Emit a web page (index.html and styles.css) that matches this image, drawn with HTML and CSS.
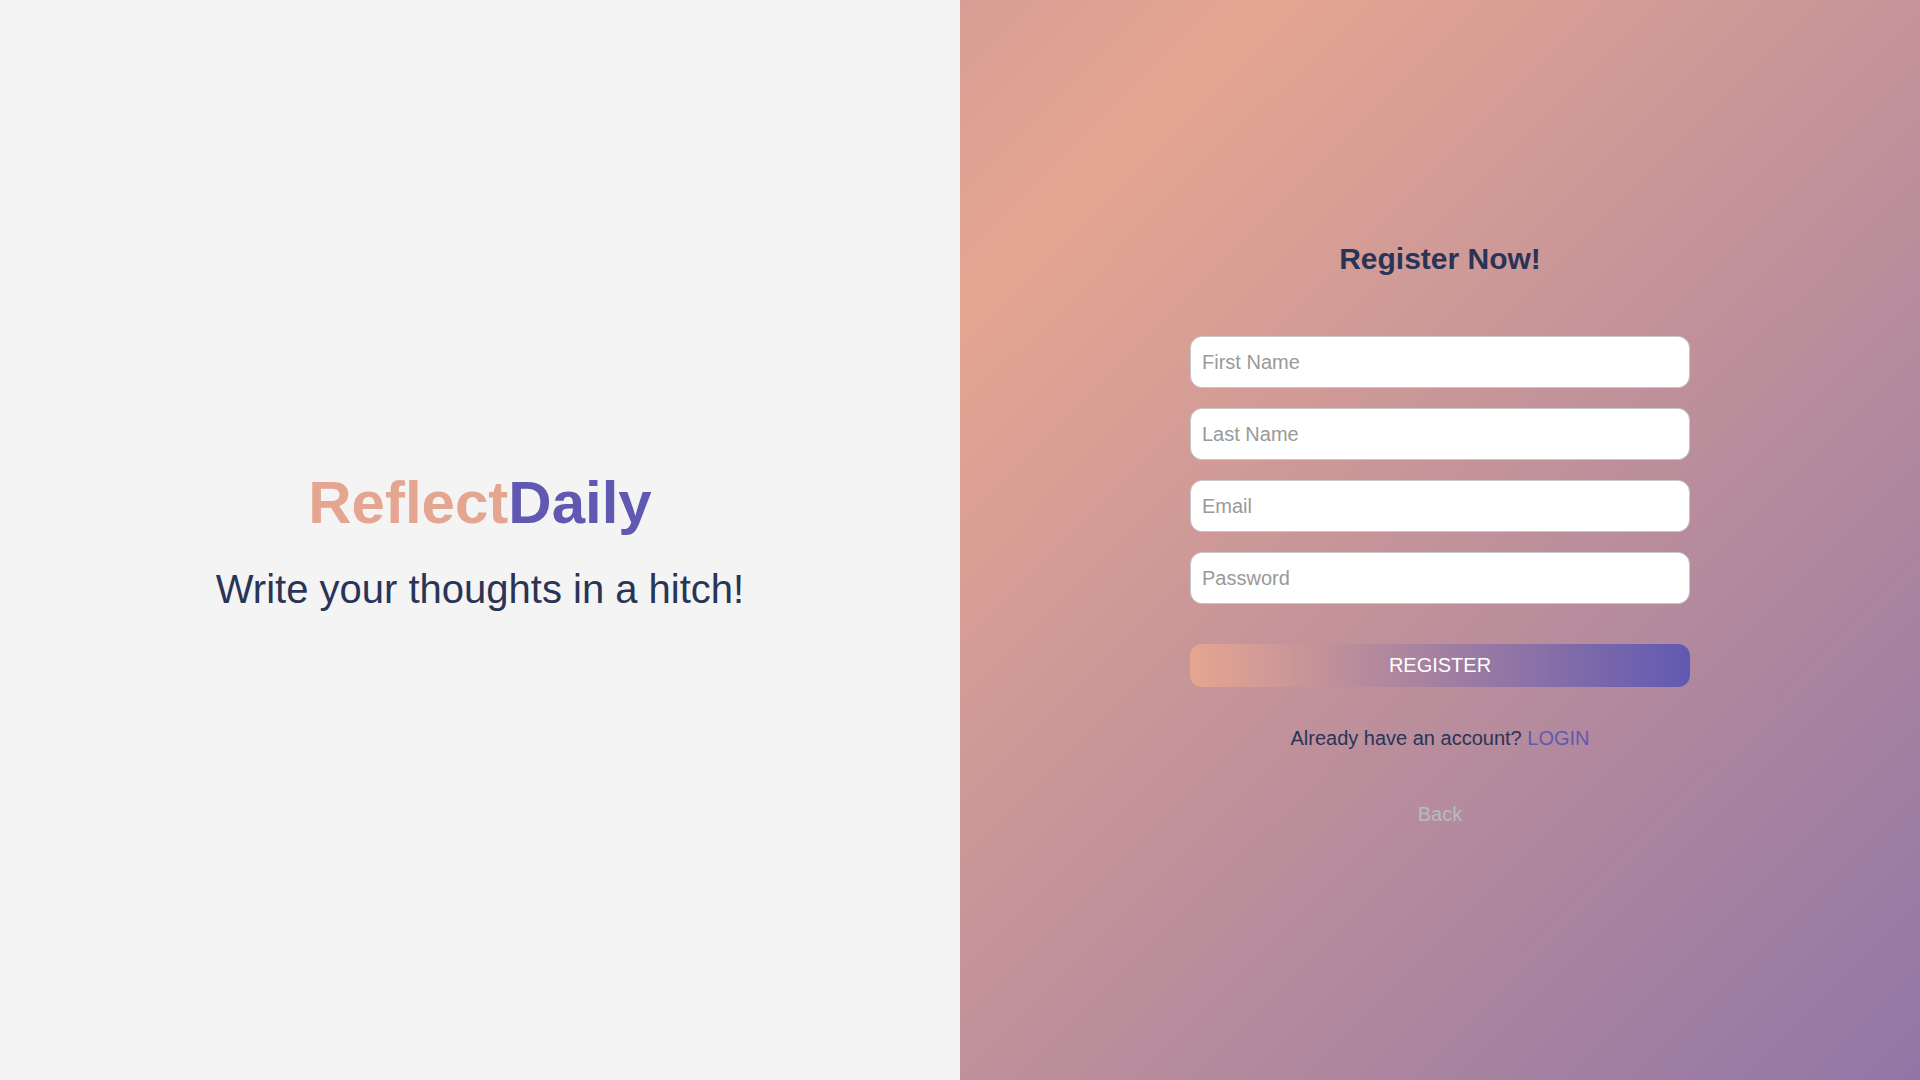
FILE: index.html
```html
<!DOCTYPE html>
<html lang="en">
<head>
  <meta charset="utf-8">
  <meta name="viewport" content="width=device-width, initial-scale=1">
  <title>ReflectDaily - Register</title>
  <link rel="stylesheet" href="styles.css">
</head>
<body>
  <main class="page">
    <section class="intro">
      <h1 class="brand"><span class="brand-first">Reflect</span><span class="brand-second">Daily</span></h1>
      <p class="tagline">Write your thoughts in a hitch!</p>
    </section>
    <section class="panel">
      <h2 class="panel-title">Register Now!</h2>
      <form class="form">
        <input class="field" type="text" name="firstName" placeholder="First Name" aria-label="First Name">
        <input class="field" type="text" name="lastName" placeholder="Last Name" aria-label="Last Name">
        <input class="field" type="email" name="email" placeholder="Email" aria-label="Email">
        <input class="field" type="password" name="password" placeholder="Password" aria-label="Password">
        <button class="submit" type="submit">REGISTER</button>
      </form>
      <p class="login">Already have an account? <a class="login-link" href="#login">LOGIN</a></p>
      <a class="back" href="#home">Back</a>
    </section>
  </main>
</body>
</html>
```
FILE: styles.css
```css
:root {
  --peach: #e5a691;
  --purple: #6159b1;
  --navy: #2a3457;
}

* {
  box-sizing: border-box;
  margin: 0;
}

body {
  font-family: "Liberation Sans", Arial, sans-serif;
  font-size: 20px;
  color: var(--navy);
  background: #f4f4f4;
}

.page {
  display: grid;
  grid-template-columns: 1fr 1fr;
  min-height: 100vh;
}

.intro,
.panel {
  display: flex;
  flex-direction: column;
  align-items: center;
  justify-content: center;
}

.intro {
  gap: 28px;
}

.brand {
  font-size: 60px;
  line-height: 70px;
}

.brand-first {
  color: var(--peach);
}

.brand-second {
  color: var(--purple);
}

.tagline {
  font-size: 40px;
  line-height: 46px;
}

.panel {
  gap: 40px;
  background: linear-gradient(135deg, #d79e95, var(--peach) 15%, #9176a6);
}

.panel-title {
  margin-bottom: 20px;
  font-size: 30px;
  line-height: 34px;
}

.form {
  display: flex;
  flex-direction: column;
  gap: 20px;
  width: 100%;
  max-width: 500px;
}

.field {
  width: 100%;
  height: 52px;
  padding: 2px 11px 0;
  border: 1px solid #c4c8c8;
  border-radius: 12px;
  font: inherit;
  color: var(--navy);
  background: #fff;
}

.field::placeholder {
  color: #999;
}

.submit {
  margin-top: 20px;
  padding: 10px;
  border: 0;
  border-radius: 12px;
  font: inherit;
  color: #fff;
  background: linear-gradient(to right, var(--peach), var(--purple));
  cursor: pointer;
}

.login-link {
  color: var(--purple);
  text-decoration: none;
}

.back {
  padding: 13px;
  color: #b4bcc0;
  text-decoration: none;
}
```
